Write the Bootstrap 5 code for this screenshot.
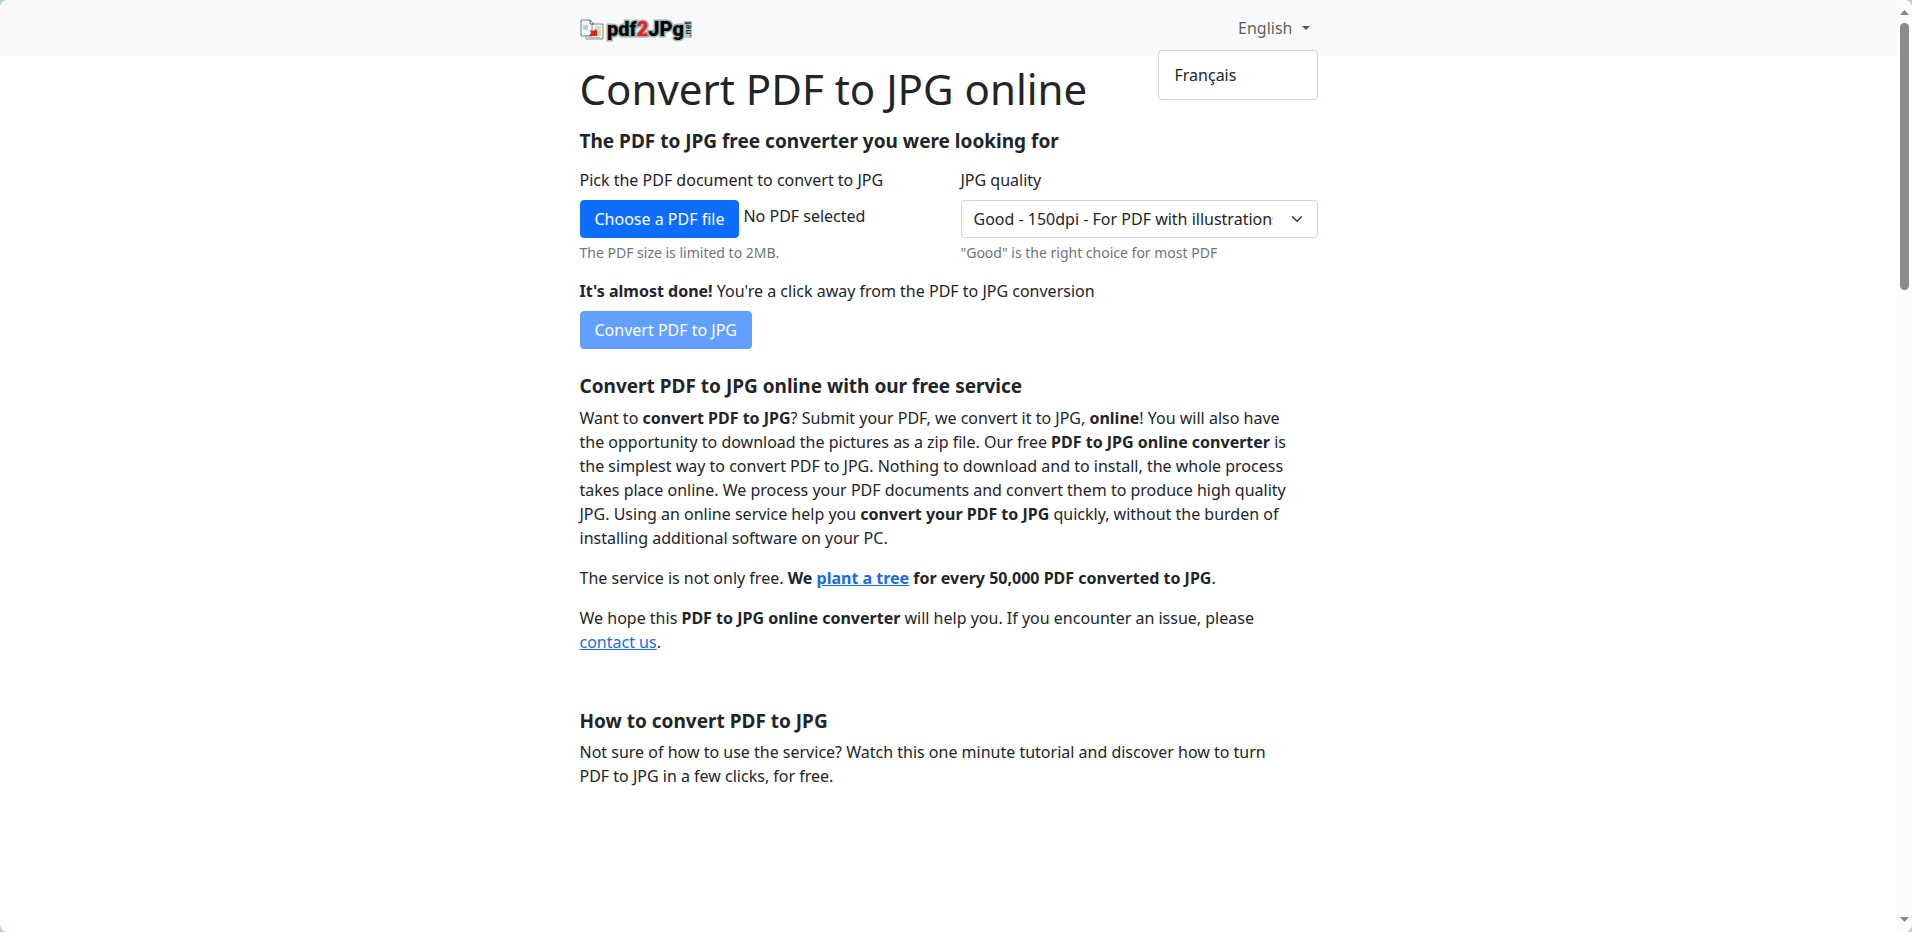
<!DOCTYPE html>
<html lang="en">
<head>
<meta charset="utf-8">
<meta name="viewport" content="width=device-width, initial-scale=1">
<title>Convert PDF to JPG online</title>
<link href="https://cdn.jsdelivr.net/npm/bootstrap@5.3.0/dist/css/bootstrap.min.css" rel="stylesheet">
<style>
  body { font-family: "Noto Sans", "Open Sans", sans-serif; font-size: 16px; line-height: 24px; background: #b9d0d1; }
  .window-frame { background: #fff; border-radius: 8px; overflow: hidden; min-height: 100vh; }
  .page-column { max-width: 762px; padding: 0 12px; }
  .top-bar { background: #f8f9fb; height: 56px; }
  .page-title { font-size: 42px; line-height: 52px; margin: 7px 0 14px; font-weight: 400; }
  .section-title { font-size: 19px; line-height: 24px; font-weight: 700; margin-bottom: 8px; }
  .lead-title { margin-bottom: 15px; }
  .howto-title { padding-top: 7px; margin-bottom: 7px; }
  .btn, .form-select { font-size: 16px; line-height: 24px; border-radius: 4px; }
  .btn-primary { padding-left: 14px; padding-right: 14px; }
  .convert-button { margin-bottom: 25px; }
  .form-select { border-color: #ced4da; padding-right: 44px; }
  .form-text { font-size: 14px; line-height: 21px; color: #6c757d; margin-top: 4px; }
  .language-toggle { color: rgba(0,0,0,.65); padding: 8px; }
  .language-toggle::after { margin-left: 9px; }
  .language-menu.show { font-size: 16px; top: 50px; right: 12px; border-radius: 4px; border-color: #ced4da; padding: 8px 0; }
  .body-copy p { padding-right: 20px; }
  p a { color: #1a6bdc; }
  .scroll-rail { width: 15px; background: #fcfcfc; height: 100vh; padding: 10px 0; }
  .scroll-thumb { width: 9px; height: 267px; border-radius: 5px; background: #8b8b8b; margin-top: 8px; }
</style>
</head>
<body>
<div class="window-frame d-flex">
  <div class="flex-grow-1">
    <nav class="top-bar">
      <div class="page-column mx-auto h-100 d-flex align-items-center justify-content-between position-relative">
        <a href="#" aria-label="pdf2jpg.net" class="d-flex pt-1">
          <svg width="114" height="28" viewBox="0 0 114 28">
            <path d="M1 4h9l4 4v12H1z" fill="#f4f9fa" stroke="#6b7f80"/>
            <path d="M3 9h5v5H3z" fill="#b9d0dc"/>
            <path d="M12 8h11v15H6v-3h6z" fill="#f3f6ea" stroke="#7a9584"/>
            <path d="M15 10h6v10h-6z" fill="#d0dfc0"/>
            <path d="M10 4v4h4" fill="none" stroke="#526864"/>
            <path d="M10 14l3 1 3-2 1 2v5H9l2-3z" fill="#de231b"/>
            <path d="M8 21h12v1H8z" fill="#a8c69b"/>
            <text x="27" y="20" font-family="Roboto, sans-serif" font-weight="900" font-size="20" paint-order="stroke" fill="#050505" stroke="#9db3ae" stroke-width="3">pdf<tspan fill="#ec1c18">2</tspan>JPg</text>
            <path d="M104 5h8v17h-8z" fill="#bccdca"/>
            <text transform="translate(111 21) rotate(-90)" font-family="Roboto, sans-serif" font-weight="700" font-size="9" fill="#213b37">.net</text>
          </svg>
        </a>
        <button class="btn language-toggle dropdown-toggle border-0" type="button" aria-expanded="true">English</button>
        <ul class="dropdown-menu language-menu show">
          <li><a class="dropdown-item" href="#">Français</a></li>
        </ul>
      </div>
    </nav>
    <main class="page-column mx-auto body-copy">
      <h1 class="page-title">Convert PDF to JPG online</h1>
      <h2 class="section-title lead-title">The PDF to JPG free converter you were looking for</h2>
      <form>
        <div class="row mb-3">
          <div class="col-sm-6">
            <label class="d-block mb-2" for="pick">Pick the PDF document to convert to JPG</label>
            <div class="d-flex gap-1"><button type="button" id="pick" class="btn btn-primary">Choose a PDF file</button><span class="pt-1">No PDF selected</span></div>
            <div class="form-text">The PDF size is limited to 2MB.</div>
          </div>
          <div class="col-sm-6">
            <label class="d-block mb-2" for="quality">JPG quality</label>
            <select class="form-select" id="quality"><option>Good - 150dpi - For PDF with illustrations</option></select>
            <div class="form-text">"Good" is the right choice for most PDF</div>
          </div>
        </div>
        <p class="mb-2"><strong>It's almost done!</strong> You're a click away from the PDF to JPG conversion</p>
        <button type="submit" class="btn btn-primary convert-button" disabled>Convert PDF to JPG</button>
      </form>
      <h2 class="section-title">Convert PDF to JPG online with our free service</h2>
      <p>Want to <strong>convert PDF to JPG</strong>? Submit your PDF, we convert it to JPG, <strong>online</strong>! You will also have the opportunity to download the pictures as a zip file. Our free <strong>PDF to JPG online converter</strong> is the simplest way to convert PDF to JPG. Nothing to download and to install, the whole process takes place online. We process your PDF documents and convert them to produce high quality JPG. Using an online service help you <strong>convert your PDF to JPG</strong> quickly, without the burden of installing additional software on your PC.</p>
      <p>The service is not only free. <strong>We <a href="#">plant a tree</a> for every 50,000 PDF converted to JPG</strong>.</p>
      <p class="mb-5">We hope this <strong>PDF to JPG online converter</strong> will help you. If you encounter an issue, please <a href="#">contact us</a>.</p>
      <h2 class="section-title howto-title">How to convert PDF to JPG</h2>
      <p>Not sure of how to use the service? Watch this one minute tutorial and discover how to turn PDF to JPG in a few clicks, for free.</p>
    </main>
  </div>
  <div class="scroll-rail d-flex flex-column align-items-center flex-shrink-0" aria-hidden="true">
    <svg width="9" height="5" viewBox="0 0 18 10"><path d="M0 10L9 0L18 10z" fill="#858585"/></svg>
    <div class="scroll-thumb"></div>
    <svg class="mt-auto" width="9" height="5" viewBox="0 0 18 10"><path d="M0 0L9 10L18 0z" fill="#858585"/></svg>
  </div>
</div>
<script src="https://cdn.jsdelivr.net/npm/bootstrap@5.3.0/dist/js/bootstrap.bundle.min.js"></script>
</body>
</html>
